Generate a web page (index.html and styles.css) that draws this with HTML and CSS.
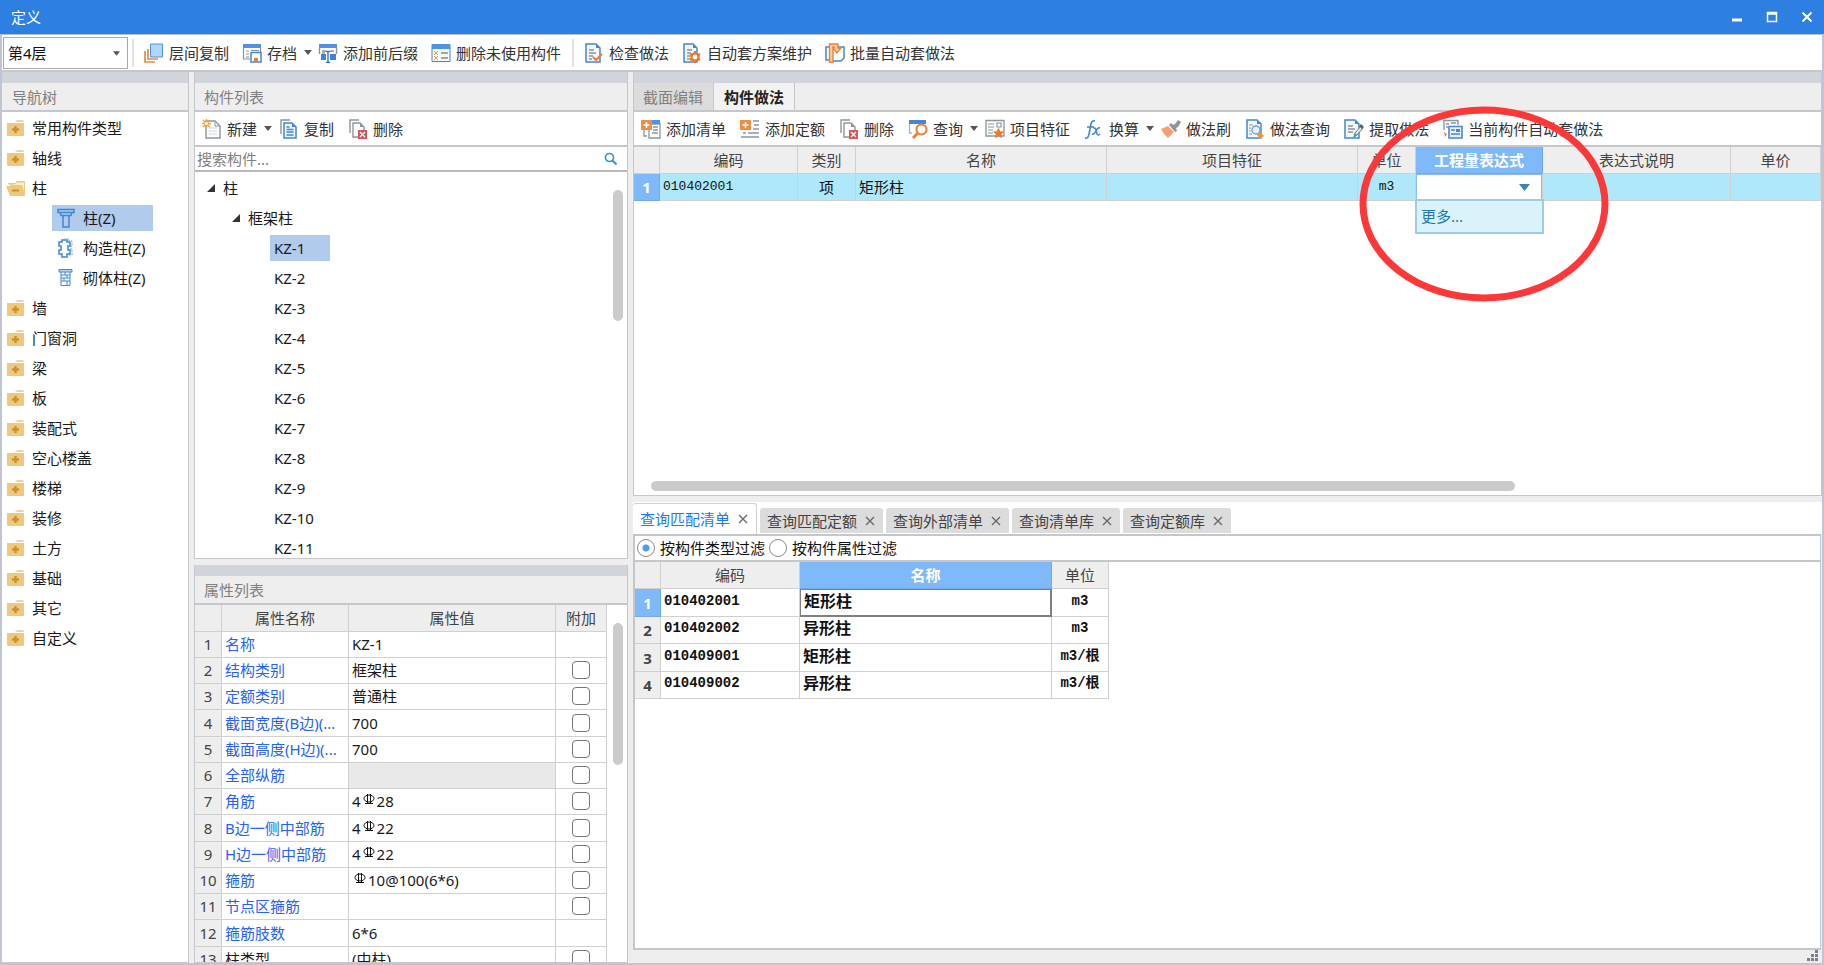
FILE: index.html
```html
<!DOCTYPE html>
<html lang="zh-CN">
<head>
<meta charset="utf-8">
<title>定义</title>
<link rel="stylesheet" href="styles.css">
</head>
<body>
<svg class="defs" aria-hidden="true">
  <symbol id="folder" viewBox="0 0 20 18"><path d="M9 3q1-2 3-2h4q2 0 2 2z" fill="#f3d39a"/><path d="M1 4h17v12q0 1-1 1H2q-1 0-1-1z" fill="#efc880"/><path d="M9.500 7v7M6 10.500h7" stroke="#c8922f" stroke-width="2.400"/></symbol>
  <symbol id="folder-open" viewBox="0 0 20 18"><path d="M2 5V4h7l2-2h8v14h-1z" fill="#efc880"/><path d="M4 6h12l2 6V3.500h-7L9 5z" fill="#fbeccb"/><path d="M0 7h15l4 10H4z" fill="#efc880"/><path d="M6 11.500h7" stroke="#c8922f" stroke-width="2"/></symbol>
  <symbol id="column" viewBox="0 0 20 20"><path d="M2 1.500h16v3H2zM4 4.500h12l-1 3H5zM7 7.500h6V19H7z" fill="none" stroke="#3f87d4" stroke-width="1.500"/></symbol>
  <symbol id="column-tie" viewBox="0 0 20 20"><path d="M6 4V2h5v2h3v4h-2v4h2v4h-3v3H6v-3H3v-4h2V8H3V4z" fill="#fff" stroke="#3f87d4" stroke-width="1.500"/><path d="M8 1h5v2h3v5h-1v4h1v5h-3" fill="none" stroke="#75aae3" stroke-dasharray="2 1"/></symbol>
  <symbol id="column-brick" viewBox="0 0 20 20"><path d="M3 1.500h13v2.500H3z" fill="#b9d5f5" stroke="#3f87d4"/><path d="M5 4v13.500h9V4M5 7h9M5 10h9M5 13h9M9 4v3M11 7v3M8 10v3M11 13v4" fill="none" stroke="#3f87d4"/></symbol>
  <symbol id="layers" viewBox="0 0 20 20"><path d="M1 8v11h10M4 6v10h10" fill="none" stroke="#e88a45" stroke-width="1.700"/><path d="M6.500 1h12v13h-12z" fill="#b4d6fc" stroke="#4f93e0"/></symbol>
  <symbol id="save" viewBox="0 0 20 20"><path d="M1 1h18v4H1z" fill="#4e93e4"/><path d="M1.500 5v11H8M18.500 5v4M4 8h3M4 11h3M4 14h3M9 7.500h8" fill="none" stroke="#8b9298" stroke-width="1.200"/><path d="M9 9.500h10V19H9z" fill="#fff" stroke="#4386d5" stroke-width="1.500"/><path d="M12 15h4v4h-4z" fill="#e97b2e"/></symbol>
  <symbol id="prefix" viewBox="0 0 20 20"><path d="M1 1h18v4H1z" fill="#4e93e4"/><path d="M1.500 5v6M18.500 5v6M4 8h4M12 8h4M4 10h3" fill="none" stroke="#8b9298" stroke-width="1.400"/><path d="M3 11h5v6H3zM12 11h6v6h-6z" fill="#3e83d8"/><path d="M8 8.500h4M10 8.500v11M8 19.500h4" fill="none" stroke="#3275c6" stroke-width="1.400"/></symbol>
  <symbol id="unused" viewBox="0 0 20 20"><path d="M1 1.500h18v17H1z" fill="#f6f8fa" stroke="#4386d5"/><path d="M1 1h18v5H1z" fill="#4e93e4"/><path d="M3 8l4 4M7 8l-4 4M3 13l4 4M7 13l-4 4" stroke="#ee9a43"/><path d="M10 10h7M10 15h7" stroke="#848c92" stroke-width="1.400"/></symbol>
  <symbol id="check" viewBox="0 0 20 20"><path d="M2 1h10l4 4v14H2z" fill="#f5f9fe" stroke="#4386d5" stroke-width="1.500"/><path d="M12 1v4h4z" fill="#4386d5"/><path d="M5 7h5M5 10h7M5 13h4M5 16h3" stroke="#89929b" stroke-width="1.300"/><path d="M9 14l3 3 6-6" fill="none" stroke="#ed7a2c" stroke-width="2"/></symbol>
  <symbol id="gear" viewBox="0 0 20 20"><path d="M2 1h9l4 4v14H2z" fill="#f5f9fe" stroke="#4386d5" stroke-width="1.500"/><path d="M11 1v4h4z" fill="#4386d5"/><path d="M5 7h5M5 10h4M5 13h3M5 16h3" stroke="#89929b" stroke-width="1.300"/><circle cx="13" cy="14" r="3.600" fill="#fff" stroke="#ed7a2c" stroke-width="2.400"/><path d="M13 8v2M13 18v2M8 11l2 1M16 16l2 1M8 17l2-1M16 12l2-1" stroke="#ed7a2c" stroke-width="2"/></symbol>
  <symbol id="batch" viewBox="0 0 20 20"><path d="M4 4H1v13h4M12 4h7v11l-3 3H8" fill="#fff" stroke="#4386d5" stroke-width="1.500"/><path d="M4.500 19.500V1H13v4h3l-4 5-4-5h1V4H8v15.500z" fill="#fbd0ac" stroke="#ed8035" stroke-width="1.400"/></symbol>
  <symbol id="new" viewBox="0 0 20 20"><path d="M4 2h9l5 5v12H4z" fill="#fbfcfc" stroke="#8b969d" stroke-width="1.400"/><path d="M13 2v5h5" fill="none" stroke="#8b969d"/><path d="M7 9h8M7 12h8M7 15h8" stroke="#d4d9dc"/><path d="M1 1l7 7M8 1L1 8M4.500 0v9M0 4.500h9" stroke="#f5a13c" stroke-width="1.400"/><circle cx="4.500" cy="4.500" r="1.500" fill="#fff"/></symbol>
  <symbol id="copy" viewBox="0 0 20 20"><path d="M2 15V1h9" fill="none" stroke="#8b969d" stroke-width="1.400"/><path d="M5 4h8l4 4v11H5z" fill="#eef5fe" stroke="#4386d5" stroke-width="1.500"/><path d="M13 4v4h4z" fill="#4386d5"/><path d="M7.500 8h3M7.500 10.500h7M7.500 13h7M7.500 16h7" stroke="#4386d5" stroke-width="1.300"/></symbol>
  <symbol id="delete" viewBox="0 0 20 20"><path d="M2 14V1h9" fill="none" stroke="#8b969d" stroke-width="1.400"/><path d="M5 4h7l4 4v10H5z" fill="#fff" stroke="#8b969d" stroke-width="1.400"/><path d="M12 4v4h4z" fill="#8b969d"/><path d="M10 11h9v9h-9z" fill="#d65357"/><path d="M12 13l5 5M17 13l-5 5" stroke="#fff" stroke-width="1.300"/></symbol>
  <symbol id="add-list" viewBox="0 0 20 20"><path d="M8 5h11v14H8z" fill="#fff" stroke="#8b969d" stroke-width="1.300"/><path d="M10 1h9v4h-9z" fill="#4e93e4"/><path d="M3 11v6h3M12 8h5M12 11h5M11 14h6" fill="none" stroke="#8b969d" stroke-width="1.300"/><path d="M0 1h11v10H0z" fill="#ec8f45"/><path d="M5.500 3v6M2.500 6h6" stroke="#fff" stroke-width="1.500"/></symbol>
  <symbol id="add-quota" viewBox="0 0 20 20"><path d="M13 2h6M14 6h5M13 10h6M8 14h11M3 14h3M1 18h18" stroke="#8b969d" stroke-width="1.600"/><path d="M0 1h11v10H0z" fill="#ec8f45"/><path d="M5.500 3v6M2.500 6h6" stroke="#fff" stroke-width="1.500"/></symbol>
  <symbol id="query" viewBox="0 0 20 20"><path d="M1 1h17v4H1z" fill="#4386d5"/><path d="M1.500 5v9H4" fill="none" stroke="#8fb6e6" stroke-width="1.300"/><circle cx="13.500" cy="10.500" r="5" fill="#fff" stroke="#ed8035" stroke-width="2.200"/><path d="M10 14l-5 5" stroke="#ed8035" stroke-width="3"/></symbol>
  <symbol id="feature" viewBox="0 0 20 20"><path d="M1 1.500h18V17H1z" fill="#fbfcfc" stroke="#8b969d" stroke-width="1.300"/><path d="M3 5h6M3 8h6M3 11h5M3 14h5M12 4h4v4h-4z" fill="none" stroke="#8b969d" stroke-width="1.200"/><path d="M13.500 8.500l1.700 3.700 4 .4-3 2.700.9 4-3.600-2-3.600 2 .9-4-3-2.700 4-.4z" fill="#ed7a2c"/></symbol>
  <symbol id="fx" viewBox="0 0 20 20"><path d="M1 19q3 1 4-4L7 5q1-4 4-3M3 8h7M9 9q2-1 3 2l1 4q1 2 3 0M16 9q-2-1-4 3t-4 3" fill="none" stroke="#4386d5" stroke-width="1.600"/></symbol>
  <symbol id="brush" viewBox="0 0 20 20"><path d="M0 10l7-3 6 6-6 6q-4-3-7-9z" fill="#fb9d70"/><path d="M8 6l2-2 2 2 2-1 3-4 3 2-3 5-2 1 1 3-2 1z" fill="#8b969d"/></symbol>
  <symbol id="method-query" viewBox="0 0 20 20"><path d="M2 1h10l4 4v14H2z" fill="#f5f9fe" stroke="#4386d5" stroke-width="1.500"/><path d="M12 1v4h4z" fill="#4386d5"/><path d="M4 6h4M4 9h2M4 12h2M4 15h3" stroke="#89929b"/><circle cx="11" cy="11" r="4" fill="#e7f1fe" stroke="#6d9fdc" stroke-width="1.400"/><path d="M15 13l4 4-4 3-3-4z" fill="#f0942f"/></symbol>
  <symbol id="extract" viewBox="0 0 20 20"><path d="M1 1h10l4 4v14H1z" fill="#f5f9fe" stroke="#4386d5" stroke-width="1.500"/><path d="M11 1v4h4z" fill="#4386d5"/><path d="M4 7h5M4 10h7M4 13h5" stroke="#89929b" stroke-width="1.300"/><path d="M10 18l1-4 6-7 2 2-6 7z" fill="#e2eff1" stroke="#68777d"/><path d="M16 6l3 3" stroke="#59646a" stroke-width="3"/><path d="M9 19l2-5 2 2z" fill="#43a8a4"/></symbol>
  <symbol id="auto" viewBox="0 0 20 20"><path d="M1 11V1.500h14V6M3 5h3M3 8h2M8 4h5" fill="none" stroke="#8b969d" stroke-width="1.400"/><path d="M6 7.500h13V19H6z" fill="#eaf3fe" stroke="#4386d5" stroke-width="1.600"/><path d="M8 11h4M8 15h9" stroke="#4386d5" stroke-width="1.300"/><path d="M13 10h4v3h-4z" fill="#4386d5"/><path d="M1 13l3 2-2 3" fill="#ed8035"/></symbol>
  <symbol id="rebar" viewBox="0 0 14 14"><ellipse cx="7" cy="5.500" rx="5" ry="3.500" fill="none" stroke="#111"/><path d="M5.500 1v9M8.500 1v9M3 10.500h8" stroke="#111"/></symbol>
  <symbol id="close" viewBox="0 0 10 10"><path d="M1 1l8 8M9 1L1 9" stroke="currentColor" stroke-width="1.300"/></symbol>
  <symbol id="caret" viewBox="0 0 8 5"><path d="M0 0h8L4 5z" fill="currentColor"/></symbol>
  <symbol id="expander" viewBox="0 0 8 8"><path d="M8 0v8H0z" fill="#333"/></symbol>
</svg>

<div class="window">
  <header class="titlebar">
    <h1>定义</h1>
    <div class="window-buttons">
      <button aria-label="最小化"><svg viewBox="0 0 12 12"><path d="M1 9h10" stroke="#fff" stroke-width="3"/></svg></button>
      <button aria-label="最大化"><svg viewBox="0 0 12 12"><path d="M1.500 1.500h9v9h-9zM1 3h10" fill="none" stroke="#fff" stroke-width="1.500"/></svg></button>
      <button aria-label="关闭"><svg viewBox="0 0 12 12"><path d="M1.500 1.500l9 9M10.500 1.500l-9 9" stroke="#fff" stroke-width="2"/></svg></button>
    </div>
  </header>

  <div class="toolbar main-toolbar">
    <div class="floor">
      <select aria-label="楼层"><option>第4层</option></select>
      <svg class="caret"><use href="#caret"/></svg>
    </div>
    <span class="separator"></span>
    <button class="tool"><svg><use href="#layers"/></svg>层间复制</button>
    <button class="tool menu"><svg><use href="#save"/></svg>存档<svg class="caret"><use href="#caret"/></svg></button>
    <button class="tool"><svg><use href="#prefix"/></svg>添加前后缀</button>
    <button class="tool"><svg><use href="#unused"/></svg>删除未使用构件</button>
    <span class="separator"></span>
    <button class="tool"><svg><use href="#check"/></svg>检查做法</button>
    <button class="tool"><svg><use href="#gear"/></svg>自动套方案维护</button>
    <button class="tool"><svg><use href="#batch"/></svg>批量自动套做法</button>
  </div>

  <main class="workspace">
    <section class="panel nav-panel">
      <div class="grip"></div>
      <h2 class="panel-title">导航树</h2>
      <ul class="tree nav-tree">
        <li><svg><use href="#folder"/></svg>常用构件类型</li>
        <li><svg><use href="#folder"/></svg>轴线</li>
        <li><svg><use href="#folder-open"/></svg>柱</li>
        <li class="child"><span class="node selected"><svg><use href="#column"/></svg>柱(Z)</span></li>
        <li class="child"><span class="node"><svg><use href="#column-tie"/></svg>构造柱(Z)</span></li>
        <li class="child"><span class="node"><svg><use href="#column-brick"/></svg>砌体柱(Z)</span></li>
        <li><svg><use href="#folder"/></svg>墙</li>
        <li><svg><use href="#folder"/></svg>门窗洞</li>
        <li><svg><use href="#folder"/></svg>梁</li>
        <li><svg><use href="#folder"/></svg>板</li>
        <li><svg><use href="#folder"/></svg>装配式</li>
        <li><svg><use href="#folder"/></svg>空心楼盖</li>
        <li><svg><use href="#folder"/></svg>楼梯</li>
        <li><svg><use href="#folder"/></svg>装修</li>
        <li><svg><use href="#folder"/></svg>土方</li>
        <li><svg><use href="#folder"/></svg>基础</li>
        <li><svg><use href="#folder"/></svg>其它</li>
        <li><svg><use href="#folder"/></svg>自定义</li>
      </ul>
    </section>

    <div class="column">
      <section class="panel list-panel">
        <div class="grip"></div>
        <h2 class="panel-title">构件列表</h2>
        <div class="toolbar">
          <button class="tool menu"><svg><use href="#new"/></svg>新建<svg class="caret"><use href="#caret"/></svg></button>
          <button class="tool"><svg><use href="#copy"/></svg>复制</button>
          <button class="tool"><svg><use href="#delete"/></svg>删除</button>
        </div>
        <div class="search">
          <input type="text" placeholder="搜索构件..." aria-label="搜索构件">
          <svg viewBox="0 0 14 14"><circle cx="5.500" cy="5.500" r="4" fill="none" stroke="#3d93c9" stroke-width="1.700"/><path d="M8.500 8.500l4 4" stroke="#3d93c9" stroke-width="2.200"/></svg>
        </div>
        <div class="scroll-area">
          <ul class="tree part-tree">
            <li class="level-1"><svg><use href="#expander"/></svg>柱</li>
            <li class="level-2"><svg><use href="#expander"/></svg>框架柱</li>
            <li class="level-3"><span class="node selected">KZ-1</span></li>
            <li class="level-3"><span class="node">KZ-2</span></li>
            <li class="level-3"><span class="node">KZ-3</span></li>
            <li class="level-3"><span class="node">KZ-4</span></li>
            <li class="level-3"><span class="node">KZ-5</span></li>
            <li class="level-3"><span class="node">KZ-6</span></li>
            <li class="level-3"><span class="node">KZ-7</span></li>
            <li class="level-3"><span class="node">KZ-8</span></li>
            <li class="level-3"><span class="node">KZ-9</span></li>
            <li class="level-3"><span class="node">KZ-10</span></li>
            <li class="level-3"><span class="node">KZ-11</span></li>
          </ul>
          <div class="scrollbar"><span class="thumb list-thumb"></span></div>
        </div>
      </section>

      <section class="panel props-panel">
        <div class="grip"></div>
        <h2 class="panel-title">属性列表</h2>
        <div class="scroll-area">
          <table class="grid props">
            <colgroup><col class="p-index"><col class="p-name"><col><col class="p-extra"></colgroup>
            <thead><tr><th></th><th>属性名称</th><th>属性值</th><th>附加</th></tr></thead>
            <tbody>
              <tr><th>1</th><td class="key">名称</td><td>KZ-1</td><td></td></tr>
              <tr><th>2</th><td class="key">结构类别</td><td>框架柱</td><td class="mark"><input type="checkbox" aria-label="附加 结构类别"></td></tr>
              <tr><th>3</th><td class="key">定额类别</td><td>普通柱</td><td class="mark"><input type="checkbox" aria-label="附加 定额类别"></td></tr>
              <tr><th>4</th><td class="key">截面宽度(B边)(...</td><td>700</td><td class="mark"><input type="checkbox" aria-label="附加 截面宽度"></td></tr>
              <tr><th>5</th><td class="key">截面高度(H边)(...</td><td>700</td><td class="mark"><input type="checkbox" aria-label="附加 截面高度"></td></tr>
              <tr><th>6</th><td class="key">全部纵筋</td><td class="locked"></td><td class="mark"><input type="checkbox" aria-label="附加 全部纵筋"></td></tr>
              <tr><th>7</th><td class="key">角筋</td><td>4<svg class="rebar"><use href="#rebar"/></svg>28</td><td class="mark"><input type="checkbox" aria-label="附加 角筋"></td></tr>
              <tr><th>8</th><td class="key">B边一侧中部筋</td><td>4<svg class="rebar"><use href="#rebar"/></svg>22</td><td class="mark"><input type="checkbox" aria-label="附加 B边一侧中部筋"></td></tr>
              <tr><th>9</th><td class="key">H边一侧中部筋</td><td>4<svg class="rebar"><use href="#rebar"/></svg>22</td><td class="mark"><input type="checkbox" aria-label="附加 H边一侧中部筋"></td></tr>
              <tr><th>10</th><td class="key">箍筋</td><td><svg class="rebar"><use href="#rebar"/></svg>10@100(6*6)</td><td class="mark"><input type="checkbox" aria-label="附加 箍筋"></td></tr>
              <tr><th>11</th><td class="key">节点区箍筋</td><td></td><td class="mark"><input type="checkbox" aria-label="附加 节点区箍筋"></td></tr>
              <tr><th>12</th><td class="key">箍筋肢数</td><td>6*6</td><td></td></tr>
              <tr><th>13</th><td>柱类型</td><td>(中柱)</td><td class="mark"><input type="checkbox" aria-label="附加 柱类型"></td></tr>
            </tbody>
          </table>
          <div class="scrollbar"><span class="thumb props-thumb"></span></div>
        </div>
      </section>
    </div>

    <div class="column">
      <section class="panel method-panel">
        <div class="grip"></div>
        <div class="view-tabs" role="tablist">
          <button role="tab">截面编辑</button>
          <button role="tab" class="active" aria-selected="true">构件做法</button>
        </div>
        <div class="toolbar">
          <button class="tool"><svg><use href="#add-list"/></svg>添加清单</button>
          <button class="tool"><svg><use href="#add-quota"/></svg>添加定额</button>
          <button class="tool"><svg><use href="#delete"/></svg>删除</button>
          <button class="tool menu"><svg><use href="#query"/></svg>查询<svg class="caret"><use href="#caret"/></svg></button>
          <button class="tool"><svg><use href="#feature"/></svg>项目特征</button>
          <button class="tool menu"><svg><use href="#fx"/></svg>换算<svg class="caret"><use href="#caret"/></svg></button>
          <button class="tool"><svg><use href="#brush"/></svg>做法刷</button>
          <button class="tool"><svg><use href="#method-query"/></svg>做法查询</button>
          <button class="tool"><svg><use href="#extract"/></svg>提取做法</button>
          <button class="tool"><svg><use href="#auto"/></svg>当前构件自动套做法</button>
        </div>
        <table class="grid methods">
          <colgroup><col class="m-index"><col class="m-code"><col class="m-kind"><col class="m-wide"><col class="m-wide"><col class="m-unit"><col class="m-expr"><col class="m-note"><col></colgroup>
          <thead><tr><th></th><th>编码</th><th>类别</th><th>名称</th><th>项目特征</th><th>单位</th><th class="current">工程量表达式</th><th>表达式说明</th><th>单价</th></tr></thead>
          <tbody>
            <tr>
              <th class="current">1</th><td class="code">010402001</td><td class="center">项</td><td>矩形柱</td><td></td><td class="center code">m3</td>
              <td class="editor">
                <select aria-label="工程量表达式"><option></option></select>
                <svg class="caret"><use href="#caret"/></svg>
                <ul class="options"><li>更多...</li></ul>
                <svg class="ring" viewBox="0 0 250 196"><ellipse cx="125" cy="98" rx="121" ry="94" fill="none" stroke="#fc3838" stroke-width="7"/></svg>
              </td>
              <td></td><td></td>
            </tr>
          </tbody>
        </table>
        <div class="h-scroll"><span class="thumb h-thumb"></span></div>
      </section>

      <section class="query-panel">
        <div class="query-tabs" role="tablist">
          <div class="query-tab active"><button role="tab" aria-selected="true">查询匹配清单</button><button aria-label="关闭 查询匹配清单"><svg><use href="#close"/></svg></button></div>
          <div class="query-tab"><button role="tab">查询匹配定额</button><button aria-label="关闭 查询匹配定额"><svg><use href="#close"/></svg></button></div>
          <div class="query-tab"><button role="tab">查询外部清单</button><button aria-label="关闭 查询外部清单"><svg><use href="#close"/></svg></button></div>
          <div class="query-tab"><button role="tab">查询清单库</button><button aria-label="关闭 查询清单库"><svg><use href="#close"/></svg></button></div>
          <div class="query-tab"><button role="tab">查询定额库</button><button aria-label="关闭 查询定额库"><svg><use href="#close"/></svg></button></div>
        </div>
        <div class="query-body">
          <div class="filters">
            <label><input type="radio" name="filter" checked>按构件类型过滤</label>
            <label><input type="radio" name="filter">按构件属性过滤</label>
          </div>
          <table class="grid matches">
            <colgroup><col class="q-index"><col class="q-code"><col class="q-name"><col class="q-unit"></colgroup>
            <thead><tr><th></th><th>编码</th><th class="current">名称</th><th>单位</th></tr></thead>
            <tbody>
              <tr><th class="current">1</th><td class="code">010402001</td><td class="focused">矩形柱</td><td class="center code">m3</td></tr>
              <tr><th>2</th><td class="code">010402002</td><td>异形柱</td><td class="center code">m3</td></tr>
              <tr><th>3</th><td class="code">010409001</td><td>矩形柱</td><td class="center code">m3/根</td></tr>
              <tr><th>4</th><td class="code">010409002</td><td>异形柱</td><td class="center code">m3/根</td></tr>
            </tbody>
          </table>
        </div>
      </section>
      <footer class="status"><svg viewBox="0 0 12 12"><path d="M8 0h3v3H8zM8 4h3v3H8zM4 4h3v3H4zM8 8h3v3H8zM4 8h3v3H4zM0 8h3v3H0z" fill="#777f8c"/></svg></footer>
    </div>
  </main>
</div>
</body>
</html>
```
FILE: styles.css
```css
* { box-sizing: border-box; }

body {
  margin: 0;
  font: 15px/20px "Noto Sans", "Noto Sans CJK SC", sans-serif;
  color: #1a1a1a;
}

h1, h2, ul { margin: 0; padding: 0; font: inherit; list-style: none; }

button, select, input { font: inherit; color: inherit; }

button {
  padding: 0;
  border: 0;
  background: none;
  white-space: nowrap;
}

select { appearance: none; }

.defs { display: none; }

.window {
  display: flex;
  flex-direction: column;
  height: 100vh;
  overflow: hidden;
  padding-bottom: 2px;
  background: #bfc5d3;
}

.titlebar {
  display: flex;
  flex: none;
  align-items: center;
  justify-content: space-between;
  height: 34px;
  padding: 0 11px;
  background: #2d7fe1;
  color: #fff;
}

.window-buttons { display: flex; gap: 23px; }
.window-buttons button { display: flex; }
.window-buttons svg { width: 12px; height: 12px; }

.toolbar {
  display: flex;
  flex: none;
  align-items: center;
  height: 35px;
  border-bottom: 2px solid #c5c7ca;
  background: #fff;
  color: #333;
}

.main-toolbar {
  height: 38px;
  margin: 0 2px;
  padding-left: 1px;
  border-top: 1px solid #b9bdc6;
}

.tool {
  display: flex;
  align-items: center;
  gap: 5px;
  height: 28px;
  padding: 0 7px;
}

.tool svg { width: 20px; height: 20px; }
.tool .caret { width: 8px; height: 5px; margin: 0 0 0 2px; color: #555; }
.main-toolbar .tool { padding: 0 7px 0 6px; }
.toolbar .menu { padding-right: 0; }

.separator { width: 2px; height: 28px; margin: 0 4px; background: #e3e3e3; }

.floor { position: relative; width: 125px; }

.floor select {
  display: block;
  width: 100%;
  height: 32px;
  padding: 0 4px;
  border: 1px solid #aaa;
  border-radius: 0;
  background: #fff;
  color: #111;
}

.floor .caret { position: absolute; right: 8px; top: 14px; width: 7px; height: 5px; color: #555; }

.workspace {
  display: grid;
  flex: 1;
  grid-template-columns: 187px 434px minmax(0, 1fr);
  gap: 5px;
  min-height: 0;
  margin: 0 2px;
  background: #eee;
}

.column { display: flex; flex-direction: column; min-width: 0; min-height: 0; }

.panel {
  display: flex;
  flex-direction: column;
  min-height: 0;
  border: solid #c5c7cc;
  border-width: 0 1px 1px;
  background: #fff;
}

.grip { flex: none; height: 11px; background: #d2d4db; }

.panel-title {
  flex: none;
  height: 29px;
  padding: 4px 9px;
  border-bottom: 2px solid #c5c7cc;
  background: #eee;
  color: #808080;
}

.nav-panel { border-left: 0; }
.nav-panel .panel-title { padding-left: 10px; }

.tree li { display: flex; align-items: center; height: 30px; }

.nav-tree { padding-top: 1px; }
.nav-tree li { gap: 6px; padding-left: 4px; }
.nav-tree svg { width: 20px; height: 18px; }
.nav-tree .child { padding-left: 50px; }

.node { display: flex; align-items: center; gap: 7px; height: 26px; padding: 0 4px; }
.nav-tree .node { width: 101px; }
.nav-tree .node svg { width: 20px; height: 20px; }
.selected { background: #b1cbec; }

.list-panel { flex: 487 1 0; margin-bottom: 6px; }
.props-panel { flex: 398 1 0; }

.search {
  display: flex;
  flex: none;
  align-items: center;
  height: 25px;
  padding-right: 9px;
  border-bottom: 2px solid #b9b9b9;
}

.search input {
  flex: 1;
  min-width: 0;
  padding: 0 2px;
  border: 0;
  outline: 0;
  background: none;
}

.search input::placeholder { color: #808080; }
.search svg { width: 14px; height: 14px; }

.scroll-area { display: flex; flex: 1; min-height: 0; overflow: hidden; }

.part-tree { flex: 1; padding-top: 1px; }
.part-tree li { gap: 8px; }
.part-tree svg { width: 8px; height: 8px; }
.part-tree .level-1 { padding-left: 12px; }
.part-tree .level-2 { padding-left: 37px; }
.part-tree .level-3 { padding-left: 75px; }
.part-tree .node { width: 60px; }

.scrollbar { flex: none; width: 20px; padding: 18px 4px 0 6px; }
.thumb { display: block; border-radius: 5px; background: #cbcbcb; }
.list-thumb { height: 131px; }
.props-thumb { height: 142px; }

.grid { border-collapse: separate; border-spacing: 0; table-layout: fixed; }

.grid th, .grid td {
  height: 26px;
  padding: 0 3px;
  border: solid #d0d0d0;
  border-width: 0 1px 1px 0;
  font-weight: 400;
  text-align: left;
  line-height: 20px;
  white-space: nowrap;
}

.grid th { padding: 0; background: #eee; color: #444; text-align: center; }
.grid thead th { height: 27px; }
.grid .center { text-align: center; }

.grid .current {
  border-color: #6faaf0;
  background: #80b9fa;
  color: #fff;
  font-weight: 700;
}

.code { font-family: "Liberation Mono", "Noto Sans CJK SC", monospace; }

.props { flex: 1; width: 0; height: 0; }
.props tbody tr:nth-child(4n) td { height: 27px; }
.props .key { color: #2463f5; }
.props .locked { background: #e9e9e9; }
.props .mark { padding: 0; text-align: center; }
.p-index { width: 27px; }
.p-name { width: 127px; }
.p-extra { width: 51px; }

.rebar { width: 14px; height: 14px; margin: 0 1px; vertical-align: 0; }

input[type="checkbox"], input[type="radio"] {
  appearance: none;
  display: block;
  width: 18px;
  height: 18px;
  margin: 0 auto;
  border: 1px solid #777;
  border-radius: 4px;
  background: #fff;
}

input[type="radio"] { margin: 0; border-color: #888; border-radius: 50%; }
input[type="radio"]:checked { background: radial-gradient(circle, #4a9bf5 3px, #fff 4px); }

.method-panel { flex: 423 1 0; margin-bottom: 6px; }

.view-tabs {
  display: flex;
  flex: none;
  height: 29px;
  border-bottom: 2px solid #c5c7cc;
  background: #eee;
}

.view-tabs button {
  padding: 0 10px 0 9px;
  border-right: 1px solid #c8c8c8;
  background: #dcdcdc;
  color: #808080;
}

.view-tabs .active { padding: 0 10px; background: #f2f2f2; color: #222; font-weight: 700; }

.methods { flex: none; width: 100%; }
.methods tbody td { height: 27px; background: #aee8fa; color: #111; }
.methods .code { font-size: 13px; }
.methods .editor { position: relative; padding: 0; background: #fff; }
.m-index { width: 26px; }
.m-code { width: 138px; }
.m-kind { width: 58px; }
.m-wide { width: 251px; }
.m-unit { width: 58px; }
.m-expr { width: 127px; }
.m-note { width: 188px; }

.editor select {
  display: block;
  width: 100%;
  height: 26px;
  border: 1px solid #8cbcf0;
  border-radius: 0;
  background: #fff;
}

.editor .caret { position: absolute; right: 12px; top: 10px; width: 11px; height: 7px; color: #3b86ad; }

.options {
  position: absolute;
  z-index: 1;
  top: 25px;
  left: -1px;
  right: -2px;
  padding: 5px 4px 6px;
  border: 2px solid #9fcbe6;
  background: #daf3fb;
  color: #1c78b4;
}

.ring {
  position: absolute;
  z-index: 2;
  top: -68px;
  left: -57px;
  width: 250px;
  height: 196px;
  pointer-events: none;
}

.h-scroll { margin-top: auto; padding: 0 306px 4px 17px; }
.h-thumb { height: 10px; }

.query-panel { display: flex; flex: 448 1 0; flex-direction: column; min-height: 0; }

.query-tabs {
  display: flex;
  flex: none;
  align-items: flex-end;
  gap: 3px;
  height: 32px;
  background: #fff;
}

.query-tab {
  display: flex;
  align-items: center;
  gap: 8px;
  height: 25px;
  margin-bottom: 1px;
  padding: 0 8px 0 7px;
  border-radius: 3px 3px 0 0;
  background: #dcdcdc;
  color: #444;
}

.query-tab svg { display: block; width: 10px; height: 10px; color: #666; }

.query-tab.active {
  height: 31px;
  margin: 0;
  border: solid #d0d0d0;
  border-width: 1px 1px 0 0;
  background: #fff;
  color: #1a7be8;
}

.query-body {
  flex: 1;
  min-height: 0;
  overflow: hidden;
  margin-right: 1px;
  border: 2px solid #c3c6cc;
  border-right-width: 1px;
  background: #fff;
}

.filters {
  display: flex;
  align-items: center;
  gap: 4px;
  height: 26px;
  padding-left: 2px;
  border-bottom: 2px solid #c5c7ca;
  color: #111;
}

.filters label { display: flex; align-items: center; gap: 5px; }

.matches tbody td { height: 28px; padding-bottom: 4px; color: #111; font-size: 16px; font-weight: 700; }
.matches tbody th { font-weight: 700; }
.matches tbody tr:nth-child(even) td { height: 27px; }
.matches .code { font-size: 14px; }
.matches .focused { border: solid #808080; border-width: 1px 2px 2px 1px; }
.q-index { width: 26px; }
.q-code { width: 139px; }
.q-name { width: 252px; }
.q-unit { width: 57px; }
.matches { width: 474px; }

.status {
  display: flex;
  flex: none;
  align-items: flex-start;
  justify-content: flex-end;
  height: 13px;
  padding-right: 3px;
}

.status svg { width: 12px; height: 12px; }
```
